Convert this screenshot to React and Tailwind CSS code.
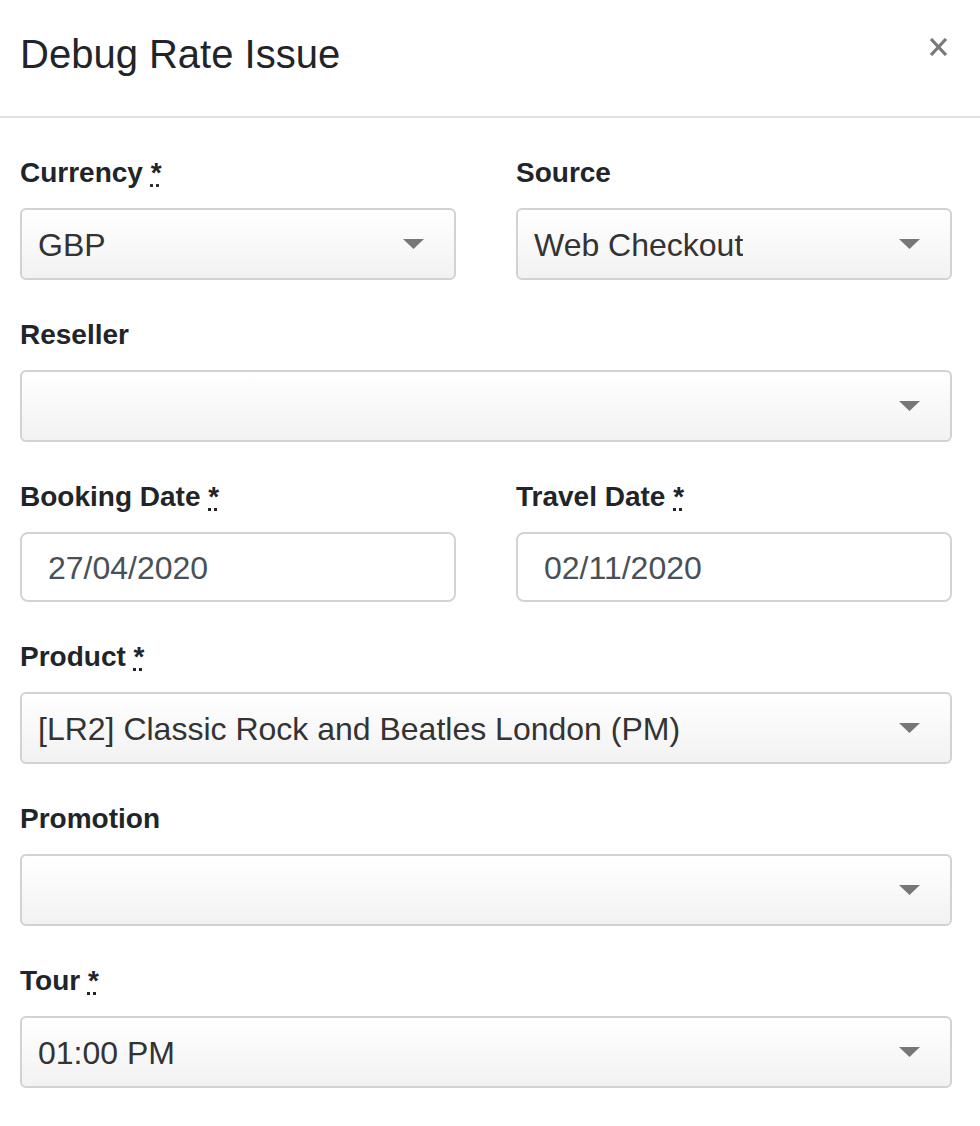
const Caret = () => (
  <svg width="21" height="10" viewBox="0 0 21 10" className="shrink-0">
    <polygon points="0,0 21,0 10.5,10" fill="#777777" />
  </svg>
);

const Label = ({ text, required }) => (
  <label className="block text-[28px] leading-[34px] font-bold text-[#212529] mb-[18px]">
    {text}
    {required && (
      <>
        {" "}
        <abbr title="required" className="cursor-help">
          *
        </abbr>
      </>
    )}
  </label>
);

const SelectBox = ({ value }) => (
  <div className="h-[72px] flex items-center justify-between pl-[16px] pr-[30px] border-2 border-[#d2d2d2] rounded-[6px] bg-linear-to-b from-white to-[#f2f2f2]">
    <span className="text-[32px] leading-[38px] pt-[2px] text-[#333333] truncate">{value}</span>
    <Caret />
  </div>
);

const DateInput = ({ value }) => (
  <div className="h-[70px] flex items-center px-[26px] border-2 border-[#d0d4d9] rounded-[8px] bg-white">
    <span className="text-[32px] leading-[38px] pt-[2px] text-[#495057]">{value}</span>
  </div>
);

const Field = ({ label, required, children }) => (
  <div className="mb-[38px]">
    <Label text={label} required={required} />
    {children}
  </div>
);

export default function App() {
  return (
    <div
      className="w-[980px] min-h-[1126px] bg-white"
      style={{ fontFamily: '"Liberation Sans", Arial, sans-serif' }}
    >
      <div className="h-[118px] flex items-start justify-between pl-[20px] pr-[32px] pt-[30px] border-b-2 border-[#e2e2e6]">
        <h5 className="text-[40px] leading-[48px] text-[#212529]">Debug Rate Issue</h5>
        <button className="mt-[8px]" aria-label="Close">
          <svg width="19" height="18" viewBox="0 0 19 18">
            <path d="M2 1 L17 17 M17 1 L2 17" stroke="#7a7a7a" strokeWidth="3.2" />
          </svg>
        </button>
      </div>

      <div className="pl-[20px] pr-[28px] pt-[38px]">
        <div className="grid grid-cols-2 gap-x-[60px]">
          <Field label="Currency" required>
            <SelectBox value="GBP" />
          </Field>
          <Field label="Source">
            <SelectBox value="Web Checkout" />
          </Field>
        </div>

        <Field label="Reseller">
          <SelectBox value="" />
        </Field>

        <div className="grid grid-cols-2 gap-x-[60px]">
          <Field label="Booking Date" required>
            <DateInput value="27/04/2020" />
          </Field>
          <Field label="Travel Date" required>
            <DateInput value="02/11/2020" />
          </Field>
        </div>

        <Field label="Product" required>
          <SelectBox value="[LR2] Classic Rock and Beatles London (PM)" />
        </Field>

        <Field label="Promotion">
          <SelectBox value="" />
        </Field>

        <Field label="Tour" required>
          <SelectBox value="01:00 PM" />
        </Field>
      </div>
    </div>
  );
}
